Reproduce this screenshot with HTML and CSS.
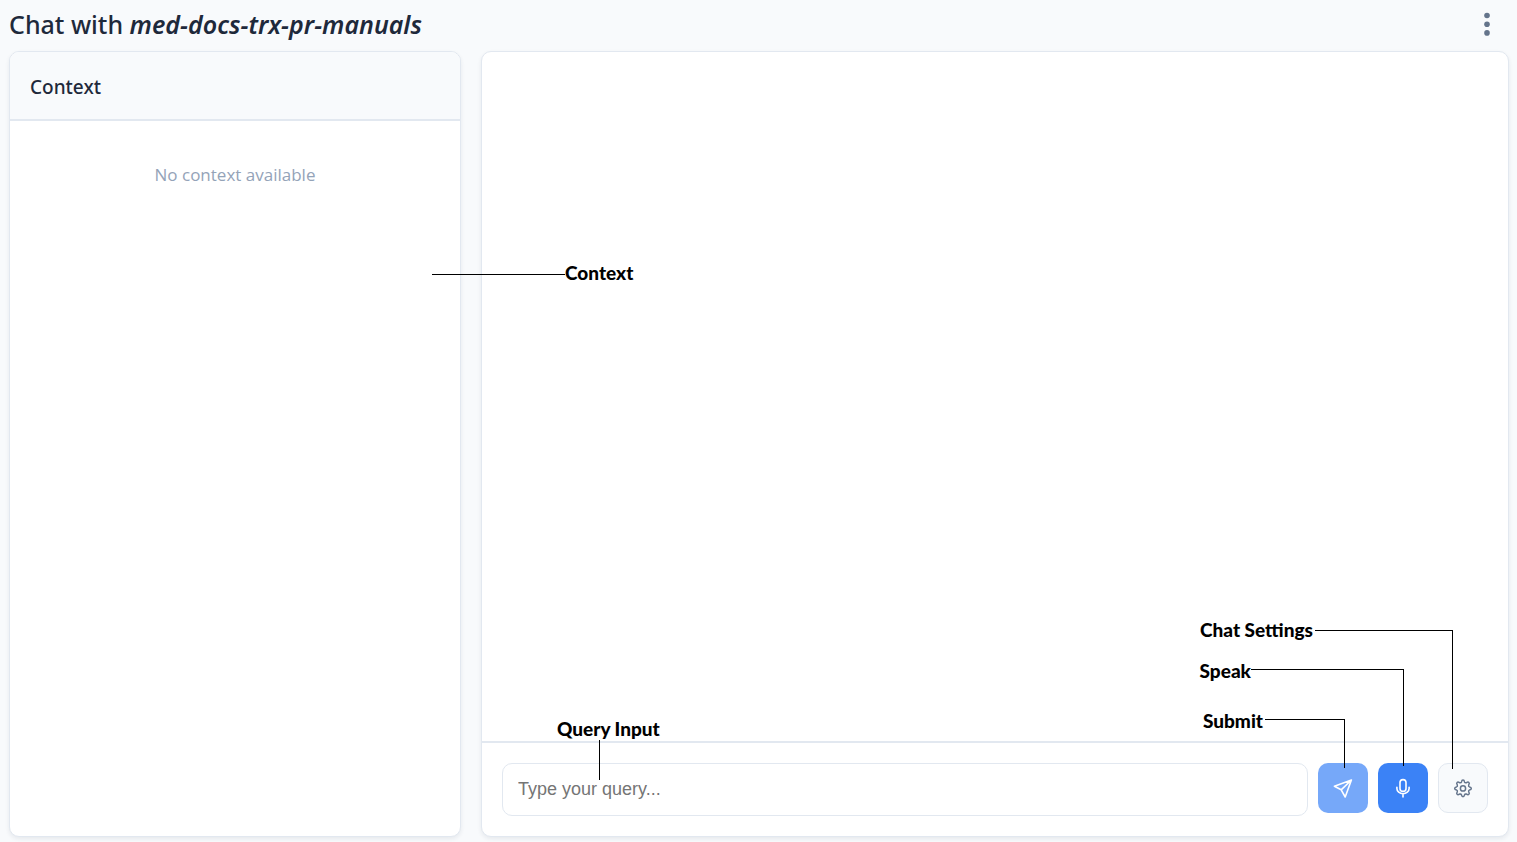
FILE: index.html
```html
<!DOCTYPE html>
<html lang="en">
<head>
  <meta charset="utf-8">
  <meta name="viewport" content="width=device-width, initial-scale=1">
  <title>Chat with med-docs-trx-pr-manuals</title>
  <link rel="stylesheet" href="styles.css">
</head>
<body>
  <header class="topbar">
    <h1 class="title">Chat with <em>med-docs-trx-pr-manuals</em></h1>
    <button class="menu-button" type="button" aria-label="More options">
      <svg width="24" height="24" viewBox="0 0 24 24" fill="currentColor" aria-hidden="true">
        <circle cx="12" cy="3.5" r="2.8"/><circle cx="12" cy="12.2" r="2.8"/><circle cx="12" cy="20.9" r="2.8"/>
      </svg>
    </button>
  </header>

  <main class="workspace">
    <aside class="panel context">
      <h2 class="context-heading">Context</h2>
      <p class="context-empty">No context available</p>
    </aside>

    <section class="panel chat" aria-label="Chat">
      <div class="messages"></div>
      <form class="composer">
        <input class="query" type="text" placeholder="Type your query..." aria-label="Query">
        <button class="action submit" type="button" aria-label="Submit">
          <svg width="20" height="20" viewBox="0 0 20 20" fill="none" stroke="currentColor" stroke-width="1.6" stroke-linejoin="round" stroke-linecap="round" aria-hidden="true">
            <path d="M18.4 2 1.4 8.2l6.8 3.6L12.2 19z M18.4 2 8.2 11.8"/>
          </svg>
        </button>
        <button class="action speak" type="button" aria-label="Speak">
          <svg width="20" height="20" viewBox="0 0 20 20" fill="none" stroke="currentColor" stroke-width="1.6" stroke-linecap="round" aria-hidden="true">
            <rect x="7" y="1.6" width="6" height="11.8" rx="3"/>
            <path d="M3.9 9.2v1.2a6.1 5.4 0 0 0 12.2 0V9.2M10 16v3"/>
          </svg>
        </button>
        <button class="action settings" type="button" aria-label="Chat settings">
          <svg width="20" height="20" viewBox="0 0 20 20" fill="none" stroke="currentColor" stroke-width="1.5" stroke-linejoin="round" aria-hidden="true">
            <circle cx="10" cy="10.4" r="2.6"/>
            <path transform="translate(0 .4)" d="M8.5 3.5Q8.8 1.7 10 1.7T11.5 3.5Q11.9 4.7 13.5 4.3Q15 3.2 15.9 4.1T15.7 6.5Q15.2 7.9 16.5 8.5Q18.3 8.8 18.3 10T16.5 11.5Q15.2 12.1 15.7 13.5Q16.8 15 15.9 15.9T13.5 15.7Q11.9 15.3 11.5 16.5Q11.2 18.3 10 18.3T8.5 16.5Q8.1 15.3 6.5 15.7Q5 16.8 4.1 15.9T4.3 13.5Q4.8 12.1 3.5 11.5Q1.7 11.2 1.7 10T3.5 8.5Q4.8 7.9 4.3 6.5Q3.2 5 4.1 4.1T6.5 4.3Q8.1 4.7 8.5 3.5Z"/>
          </svg>
        </button>
      </form>

      <div class="callout callout-context"><span class="leader"></span><span class="label">Context</span></div>
      <div class="callout callout-query"><span class="label">Query Input</span><span class="leader"></span></div>
      <div class="callout callout-settings"><span class="label">Chat Settings</span><span class="leader"></span></div>
      <div class="callout callout-speak"><span class="label">Speak</span><span class="leader"></span></div>
      <div class="callout callout-submit"><span class="label">Submit</span><span class="leader"></span></div>
    </section>
  </main>
</body>
</html>
```

FILE: styles.css
```css
* {
  box-sizing: border-box;
}

body {
  display: flex;
  flex-direction: column;
  min-height: 100vh;
  margin: 0;
  padding: 0 8px 5px 9px;
  background: #f8fafc;
  color: #1e293b;
  font-family: "Segoe UI", "Noto Sans", sans-serif;
}

.topbar {
  display: flex;
  align-items: center;
  justify-content: space-between;
  padding: 6px 10px 9px 0;
}

.title {
  margin: 0;
  font-size: 25px;
  line-height: 36px;
  font-weight: 500;
}

.title em {
  font-weight: 600;
}

.menu-button {
  display: flex;
  padding: 0;
  border: 0;
  background: none;
  color: #64748b;
}

.workspace {
  flex: 1;
  display: grid;
  grid-template-columns: 113fr 257fr;
  gap: 20px;
}

.panel {
  display: flex;
  flex-direction: column;
  background: #fff;
  border: 1px solid #e2e8f0;
  border-radius: 10px;
  box-shadow: 0 2px 4px rgba(30, 41, 59, 0.08);
}

.context-heading {
  margin: 0;
  padding: 22px 20px 18px;
  border-bottom: 2px solid #e2e8f0;
  border-radius: 9px 9px 0 0;
  background: #f8fafc;
  font-size: 19px;
  line-height: 27px;
  font-weight: 500;
}

.context-empty {
  margin: 0;
  padding: 40px 20px;
  color: #94a3b8;
  font-family: "Segoe UI", "Open Sans", sans-serif;
  font-size: 17px;
  line-height: 28px;
  text-align: center;
}

.chat {
  position: relative;
}

.messages {
  flex: 1;
}

.composer {
  display: flex;
  align-items: flex-start;
  gap: 10px;
  padding: 20px;
  border-top: 2px solid #e2e8f0;
}

.query {
  flex: 1;
  min-width: 0;
  height: 53px;
  padding: 0 15px;
  border: 1px solid #e2e8f0;
  border-radius: 10px;
  background: #fff;
  font: 18px "Liberation Sans", Arial, sans-serif;
}

.query::placeholder {
  color: #757575;
}

.action {
  display: flex;
  align-items: center;
  justify-content: center;
  width: 50px;
  height: 50px;
  padding: 0;
  border: 0;
  border-radius: 10px;
  color: #fff;
}

.submit {
  background: #76a8f9;
}

.speak {
  background: #3b82f6;
}

.settings {
  border: 1px solid #e2e8f0;
  background: #f8fafc;
  color: #64748b;
}

/* Labels with leader lines, laid over the panels */
.callout {
  position: absolute;
  display: flex;
  align-items: flex-start;
  color: #000;
  font: 900 19px/22px Lato, sans-serif;
  white-space: nowrap;
  pointer-events: none;
}

.callout .leader {
  border: 0 solid #000;
  border-top-width: 1px;
}

.callout-context {
  top: 210px;
  left: -50px;
}

.callout-context .leader {
  width: 133px;
  margin-top: 12px;
}

.callout-query {
  left: 75px;
  bottom: 56px;
  flex-direction: column;
}

.callout-query .leader {
  height: 40px;
  margin-left: 42px;
  border-width: 0 0 0 1px;
}

.callout-settings,
.callout-speak,
.callout-submit {
  gap: 2px;
}

.callout-settings .leader,
.callout-speak .leader,
.callout-submit .leader {
  border-right-width: 1px;
}

.callout-settings {
  right: 55px;
  bottom: 67px;
}

.callout-settings .leader {
  width: 138px;
  height: 139px;
  margin-top: 11px;
}

.callout-speak {
  right: 104px;
  bottom: 70px;
  gap: 0;
}

.callout-speak .leader {
  width: 153px;
  height: 97px;
  margin-top: 9px;
}

.callout-submit {
  right: 163px;
  bottom: 68px;
}

.callout-submit .leader {
  width: 80px;
  height: 49px;
  margin-top: 9px;
}
```
